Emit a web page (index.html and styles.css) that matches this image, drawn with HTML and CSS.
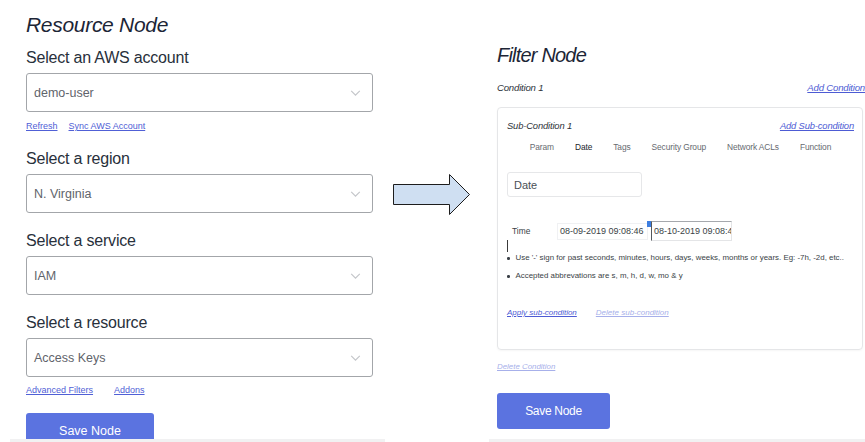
FILE: index.html
```html
<!DOCTYPE html>
<html lang="en">
<head>
<meta charset="utf-8">
<title>Resource Node → Filter Node</title>
<link rel="stylesheet" href="styles.css">
</head>
<body>
<div class="page">
  <section class="panel panel-left">
    <h1 class="title">Resource Node</h1>

    <div class="field">
      <div class="field-label">Select an AWS account</div>
      <div class="select"><span>demo-user</span><svg class="chev" viewBox="0 0 12 7" width="11" height="6"><path d="M1 1l5 5 5-5" fill="none" stroke="#c4c6ca" stroke-width="1.4"/></svg></div>
      <div class="links"><a href="#">Refresh</a><a href="#">Sync AWS Account</a></div>
    </div>

    <div class="field">
      <div class="field-label">Select a region</div>
      <div class="select"><span>N. Virginia</span><svg class="chev" viewBox="0 0 12 7" width="11" height="6"><path d="M1 1l5 5 5-5" fill="none" stroke="#c4c6ca" stroke-width="1.4"/></svg></div>
    </div>

    <div class="field">
      <div class="field-label">Select a service</div>
      <div class="select"><span>IAM</span><svg class="chev" viewBox="0 0 12 7" width="11" height="6"><path d="M1 1l5 5 5-5" fill="none" stroke="#c4c6ca" stroke-width="1.4"/></svg></div>
    </div>

    <div class="field">
      <div class="field-label">Select a resource</div>
      <div class="select"><span>Access Keys</span><svg class="chev" viewBox="0 0 12 7" width="11" height="6"><path d="M1 1l5 5 5-5" fill="none" stroke="#c4c6ca" stroke-width="1.4"/></svg></div>
      <div class="links links-wide"><a href="#">Advanced Filters</a><a href="#">Addons</a></div>
    </div>

    <button class="btn btn-left">Save Node</button>
  </section>

  <div class="connector">
    <svg width="78" height="41" viewBox="0 0 78 41"><polygon points="0.5,10.5 56.5,10.5 56.5,0.5 76.5,20.5 56.5,40.5 56.5,30.5 0.5,30.5" fill="#cfdff2" stroke="#1d1d1d" stroke-width="1"/></svg>
  </div>

  <section class="panel panel-right">
    <h1 class="title title-right">Filter Node</h1>

    <div class="cond-head">
      <span class="cond-name">Condition 1</span>
      <a href="#" class="link-italic">Add Condition</a>
    </div>

    <div class="subbox">
      <div class="sub-head">
        <span class="cond-name">Sub-Condition 1</span>
        <a href="#" class="link-italic">Add Sub-condition</a>
      </div>
      <div class="tabs">
        <span class="tab">Param</span>
        <span class="tab tab-active">Date</span>
        <span class="tab">Tags</span>
        <span class="tab">Security Group</span>
        <span class="tab">Network ACLs</span>
        <span class="tab">Function</span>
      </div>
      <div class="date-input">Date</div>
      <div class="time-row">
        <span class="time-label">Time</span>
        <span class="tinput">08-09-2019 09:08:46</span>
        <span class="spin"></span>
        <span class="tinput tinput-focus">08-10-2019 09:08:46</span>
      </div>
      <div class="caret"></div>
      <ul class="hints">
        <li>Use '-' sign for past seconds, minutes, hours, days, weeks, months or years. Eg: -7h, -2d, etc..</li>
        <li>Accepted abbrevations are s, m, h, d, w, mo &amp; y</li>
      </ul>
      <div class="sub-actions">
        <a href="#" class="link-italic">Apply sub-condition</a>
        <a href="#" class="link-italic link-faint">Delete sub-condition</a>
      </div>
    </div>

    <a href="#" class="link-italic link-faint delete-cond">Delete Condition</a>

    <button class="btn btn-right">Save Node</button>
  </section>
</div>
</body>
</html>
```

FILE: styles.css
```css
* { box-sizing: border-box; }

html, body {
  margin: 0;
  padding: 0;
  background: #ffffff;
}

body {
  font-family: "Liberation Sans", Arial, sans-serif;
  color: #2b3340;
}

.page {
  display: flex;
  height: 442px;
  overflow: hidden;
}

.panel {
  height: 442px;
  overflow: hidden;
  border-bottom: 3px solid #f1f1f2;
}

.panel-left {
  margin-left: 10px;
  width: 375px;
  padding: 13px 12px 0 16px;
}

.connector {
  width: 104px;
  padding: 174px 0 0 8px;
}
.connector svg { display: block; }

.panel-right {
  width: 376px;
  padding: 43px 0 0 8px;
}

.title {
  margin: 0 0 11px;
  font-size: 21px;
  line-height: 24px;
  font-style: italic;
  font-weight: normal;
  color: #1c2536;
  letter-spacing: -0.3px;
}

.title-right {
  font-size: 20px;
  letter-spacing: -0.8px;
  margin-bottom: 15px;
}

/* left form */
.field { margin-bottom: 18px; }

.field-label {
  font-size: 16px;
  line-height: 20px;
  letter-spacing: -0.2px;
  color: #28303b;
  margin-bottom: 5px;
}

.select {
  height: 39px;
  border: 1px solid #a3a6aa;
  border-radius: 3px;
  display: flex;
  align-items: center;
  justify-content: space-between;
  padding: 0 11px 0 7px;
  font-size: 12.5px;
  color: #5f646b;
}

.chev { display: block; }

.links {
  display: flex;
  gap: 11px;
  margin-top: 9px;
  font-size: 9px;
  line-height: 10px;
}
.links-wide { gap: 21px; margin-top: 8px; }

.links a {
  color: #5060d6;
  text-decoration: underline;
}

.btn {
  display: block;
  border: 0;
  border-radius: 3px;
  background: #5b73e0;
  color: #ffffff;
  font-family: "Liberation Sans", Arial, sans-serif;
  height: 36px;
  padding: 0;
}

.btn-left {
  width: 128px;
  font-size: 12.5px;
  margin-top: 1px;
}

/* right panel */
.cond-head {
  display: flex;
  justify-content: space-between;
  align-items: center;
  font-size: 9.6px;
  line-height: 12px;
  margin-bottom: 13px;
  letter-spacing: -0.2px;
}

.cond-name {
  font-style: italic;
  color: #2e333a;
}

.link-italic {
  font-style: italic;
  color: #4d5bd4;
  text-decoration: underline;
}

.link-faint { color: #a7b0ea; }

.subbox {
  width: 366px;
  border: 1px solid #e5e6e8;
  border-radius: 4px;
  padding: 12px 8px 30px 9px;
  box-shadow: 0 1px 2px rgba(0, 0, 0, 0.04);
}

.sub-head {
  display: flex;
  justify-content: space-between;
  align-items: center;
  font-size: 9.4px;
  line-height: 12px;
  letter-spacing: -0.15px;
}

.tabs {
  display: flex;
  justify-content: center;
  gap: 21px;
  margin-top: 9px;
  font-size: 8.4px;
  line-height: 12px;
  letter-spacing: -0.1px;
  color: #666a70;
}

.tab-active { color: #22262c; }

.date-input {
  width: 135px;
  height: 25px;
  margin-top: 19px;
  border: 1px solid #e6e7e9;
  border-radius: 3px;
  padding: 0 6px;
  display: flex;
  align-items: center;
  font-size: 11px;
  color: #4a4f56;
}

.time-row {
  display: flex;
  align-items: center;
  height: 20px;
  margin-top: 24px;
  font-size: 9px;
  color: #3a3f46;
}

.time-label {
  width: 50px;
  padding-left: 5px;
  font-size: 8.4px;
}

.tinput {
  width: 91px;
  height: 17px;
  border: 1px solid #f0f1f3;
  padding: 0 2px;
  line-height: 15px;
  overflow: hidden;
  white-space: nowrap;
}

.spin {
  width: 4px;
  height: 6px;
  background: #3d7ee0;
  align-self: flex-start;
  margin-left: -1px;
}

.tinput-focus {
  width: 81px;
  height: 20px;
  border-color: #a5a8ad #e4e5e7 #e4e5e7 #55585c;
  line-height: 18px;
}

.caret {
  width: 0;
  height: 12px;
  border-left: 1px solid #3a3a3a;
  margin-top: -1px;
}

.hints {
  list-style: none;
  margin: -1px 0 0;
  padding: 0;
  font-size: 7.9px;
  line-height: 14px;
  color: #3a3f46;
}

.hints li {
  display: flex;
  margin-bottom: 4px;
  white-space: nowrap;
}

.hints li::before {
  content: "";
  width: 2.5px;
  height: 2.5px;
  border-radius: 50%;
  background: #3a3f46;
  margin: 6px 6px 0 0;
  flex: none;
}

.sub-actions {
  display: flex;
  gap: 19px;
  margin-top: 24px;
  font-size: 8px;
  line-height: 12px;
}

.delete-cond {
  display: block;
  margin-top: 11px;
  font-size: 7.9px;
  line-height: 12px;
}

.btn-right {
  width: 113px;
  margin-top: 20px;
  font-size: 12px;
  letter-spacing: -0.3px;
}
```
